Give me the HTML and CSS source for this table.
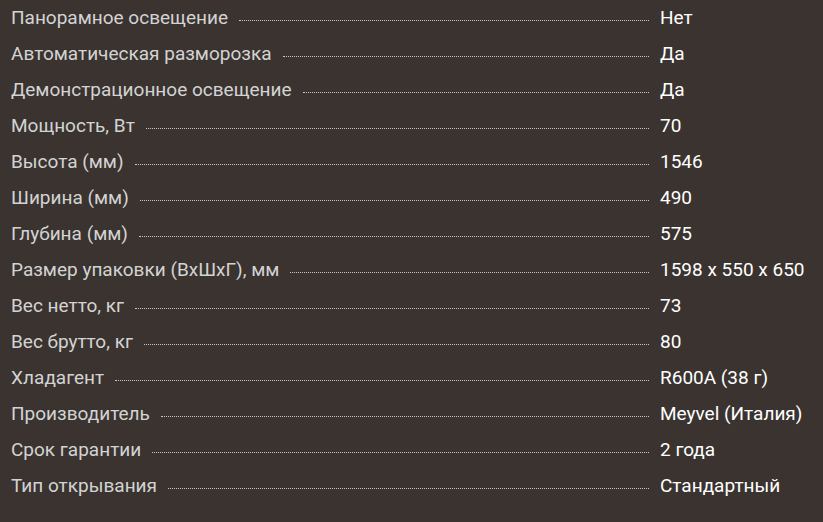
FILE: index.html
```html
<!DOCTYPE html>
<html lang="ru">
<head>
<meta charset="utf-8">
<link rel="stylesheet" href="styles.css">
</head>
<body>
<dl class="specs">
  <div class="row"><dt class="name"><span>Панорамное освещение</span><i class="dots"></i></dt><dd class="val">Нет</dd></div>
  <div class="row"><dt class="name"><span>Автоматическая разморозка</span><i class="dots"></i></dt><dd class="val">Да</dd></div>
  <div class="row"><dt class="name"><span>Демонстрационное освещение</span><i class="dots"></i></dt><dd class="val">Да</dd></div>
  <div class="row"><dt class="name"><span>Мощность, Вт</span><i class="dots"></i></dt><dd class="val">70</dd></div>
  <div class="row"><dt class="name"><span>Высота (мм)</span><i class="dots"></i></dt><dd class="val">1546</dd></div>
  <div class="row"><dt class="name"><span>Ширина (мм)</span><i class="dots"></i></dt><dd class="val">490</dd></div>
  <div class="row"><dt class="name"><span>Глубина (мм)</span><i class="dots"></i></dt><dd class="val">575</dd></div>
  <div class="row"><dt class="name"><span>Размер упаковки (ВхШхГ), мм</span><i class="dots"></i></dt><dd class="val">1598 x 550 x 650</dd></div>
  <div class="row"><dt class="name"><span>Вес нетто, кг</span><i class="dots"></i></dt><dd class="val">73</dd></div>
  <div class="row"><dt class="name"><span>Вес брутто, кг</span><i class="dots"></i></dt><dd class="val">80</dd></div>
  <div class="row"><dt class="name"><span>Хладагент</span><i class="dots"></i></dt><dd class="val">R600A (38 г)</dd></div>
  <div class="row"><dt class="name"><span>Производитель</span><i class="dots"></i></dt><dd class="val">Meyvel (Италия)</dd></div>
  <div class="row"><dt class="name"><span>Срок гарантии</span><i class="dots"></i></dt><dd class="val">2 года</dd></div>
  <div class="row"><dt class="name"><span>Тип открывания</span><i class="dots"></i></dt><dd class="val">Стандартный</dd></div>
</dl>
</body>
</html>
```
FILE: styles.css
```css
html, body {
  margin: 0;
  padding: 0;
  background: #3a3330;
}
body {
  font-family: Roboto, "Noto Sans", sans-serif;
  font-size: 19px;
}
.specs {
  margin: 0;
  padding: 0 0 0 11px;
}
.row {
  display: grid;
  grid-template-columns: 638px 1fr;
  column-gap: 11px;
  height: 36px;
  line-height: 36px;
}
.name {
  display: flex;
  align-items: baseline;
  color: #d3d3d3;
  white-space: nowrap;
}
.dots {
  flex: 1;
  margin-left: 11px;
  border-bottom: 1px dotted #c8c8c8;
  position: relative;
  top: -3px;
}
.val {
  margin: 0;
  color: #ffffff;
  white-space: nowrap;
}
```
